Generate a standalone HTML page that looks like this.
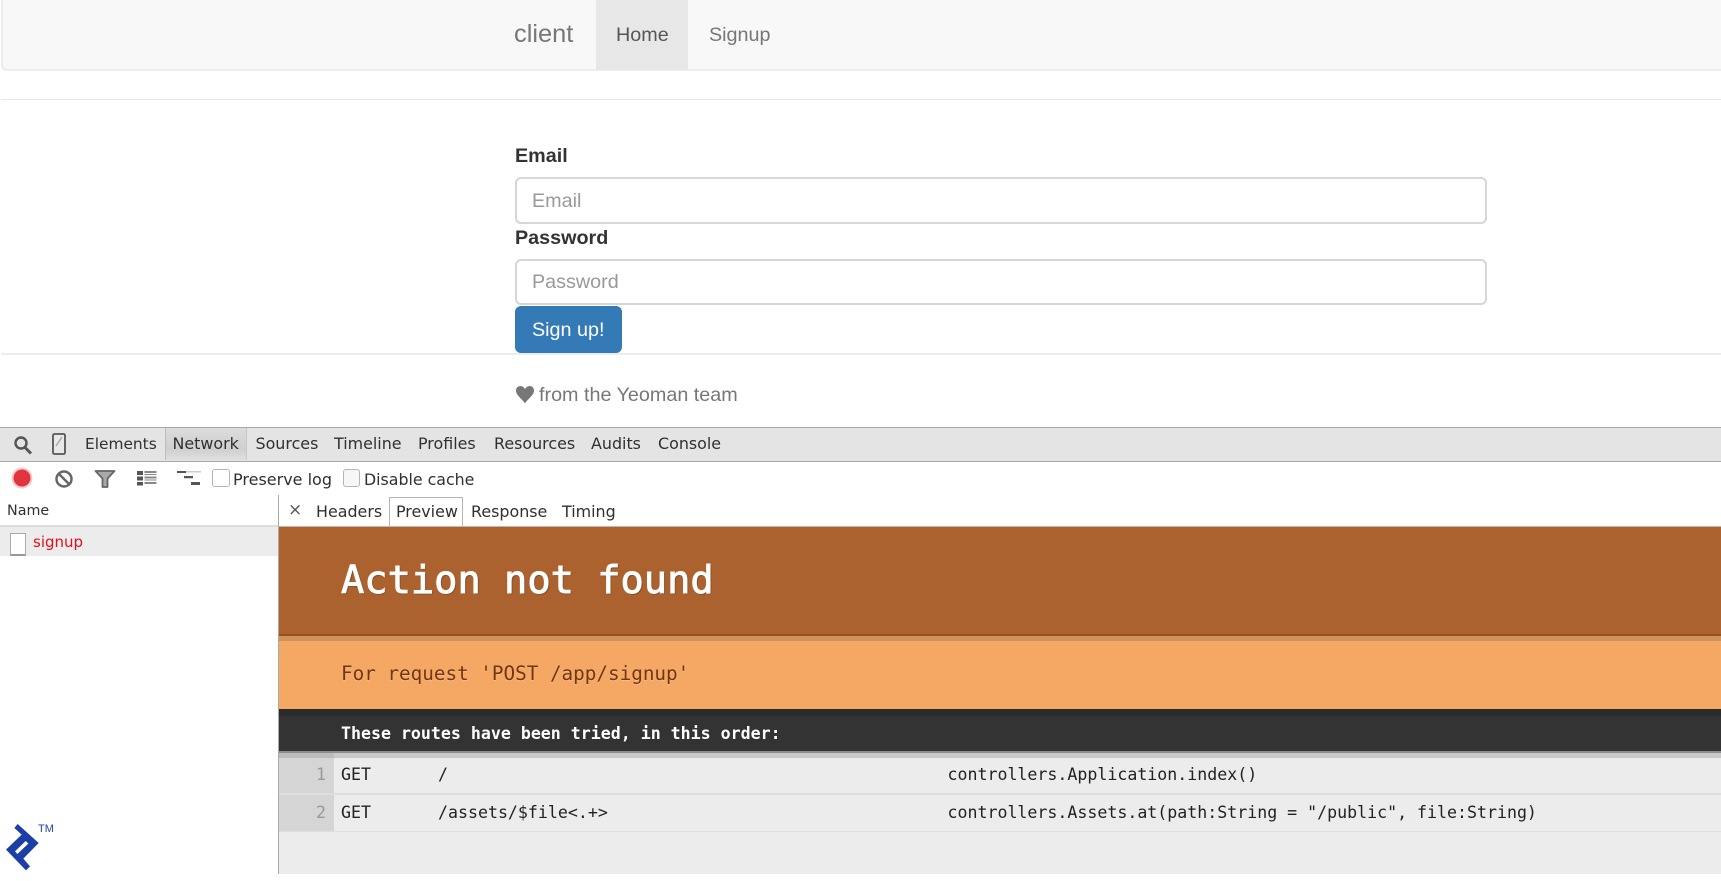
<!DOCTYPE html>
<html><head><meta charset="utf-8"><title>client</title>
<style>
html,body{margin:0;padding:0;background:#fff}
body{width:1721px;height:881px;position:relative;overflow:hidden;font-family:"Liberation Sans",sans-serif}
.a{position:absolute}
.t{position:absolute;white-space:pre;line-height:30px;height:30px}
.s{font-size:19.75px}
.d{font-family:"DejaVu Sans",sans-serif;font-size:15.9px;color:#303030}
.m{font-family:"DejaVu Sans Mono","Liberation Mono",monospace;font-size:16.6px;color:#222}
</style></head><body>
<!-- navbar -->
<div class="a" style="left:1px;top:-4px;width:1722px;height:71px;background:#f8f8f8;border:2px solid #ececec;border-radius:6px"></div>
<div class="a" style="left:596px;top:0;width:92px;height:70px;background:#e7e7e7"></div>
<div class="t" style="left:514px;top:19px;font-size:25.4px;color:#777">client</div>
<div class="t s" style="left:616px;top:20px;color:#555">Home</div>
<div class="t s" style="left:709px;top:20px;color:#777">Signup</div>
<div class="a" style="left:1px;top:98.5px;width:1720px;height:1.5px;background:#e6e6e6"></div>
<!-- form -->
<div class="t s" style="left:515px;top:141px;font-weight:bold;color:#333">Email</div>
<div class="a" style="left:515px;top:177px;width:972px;height:46.500px;border:2px solid #d6d6d6;border-radius:6px;background:#fff;box-sizing:border-box"></div>
<div class="t s" style="left:532px;top:185.500px;color:#999">Email</div>
<div class="t s" style="left:515px;top:223px;font-weight:bold;color:#333">Password</div>
<div class="a" style="left:515px;top:258.500px;width:972px;height:46.500px;border:2px solid #d6d6d6;border-radius:6px;background:#fff;box-sizing:border-box"></div>
<div class="t s" style="left:532px;top:267px;color:#999">Password</div>
<div class="a" style="left:1px;top:353px;width:1720px;height:1.5px;background:#ececec"></div>
<div class="a" style="left:515px;top:305.5px;width:107px;height:47.5px;background:#337ab7;border-radius:6px"></div>
<div class="t s" style="left:532px;top:315px;color:#fff">Sign up!</div>
<svg class="a" style="left:515px;top:385px" width="20" height="19" viewBox="0 0 20 19"><path d="M10 18.500C8 14.500 1 10.500 1 5.600 1 2.800 3 1 5.300 1 7.300 1 9 2 10 4 11 2 12.700 1 14.700 1 17 1 19 2.800 19 5.600 19 10.500 12 14.500 10 18.500Z" fill="#777"/></svg>
<div class="t s" style="left:539px;top:380px;color:#777">from the Yeoman team</div>
<!-- devtools toolbar -->
<div class="a" style="left:0;top:426.500px;width:1721px;height:35.500px;background:#e4e4e4;border-top:1.5px solid #a8a8a8;border-bottom:1.5px solid #a8a8a8;box-sizing:border-box"></div>
<div class="a" style="left:165px;top:428px;width:82px;height:32px;background:linear-gradient(#dcdcdc,#cfcfcf 65%,#dfdfdf);border-left:1px solid #bdbdbd;border-right:1px solid #c6c6c6;box-sizing:border-box"></div>
<svg class="a" style="left:12px;top:433px" width="22" height="24" viewBox="0 0 22 24"><circle cx="9" cy="10" r="5.500" fill="none" stroke="#555" stroke-width="2.400"/><path d="M13 14.500L19 20.500" stroke="#555" stroke-width="3"/></svg>
<svg class="a" style="left:51px;top:432px" width="16" height="24" viewBox="0 0 16 24"><rect x="2" y="2" width="12" height="20" rx="1.500" fill="#e8e8e8" stroke="#555" stroke-width="1.800"/><path d="M5 14L11 5" stroke="#aaa" stroke-width="1.500"/></svg>
<div class="t d" style="left:85px;top:429px;font-size:15.4px">Elements</div>
<div class="t d" style="left:172.500px;top:429px">Network</div>
<div class="t d" style="left:255.500px;top:429px">Sources</div>
<div class="t d" style="left:334px;top:429px">Timeline</div>
<div class="t d" style="left:418px;top:429px">Profiles</div>
<div class="t d" style="left:494px;top:429px">Resources</div>
<div class="t d" style="left:591px;top:429px">Audits</div>
<div class="t d" style="left:658px;top:429px">Console</div>
<!-- second bar -->
<svg class="a" style="left:8px;top:464px" width="28" height="28" viewBox="0 0 28 28"><circle cx="14" cy="14" r="10.500" fill="#f3c9cb"/><circle cx="14" cy="14" r="8.500" fill="#e2343f"/></svg>
<svg class="a" style="left:52px;top:467px" width="24" height="24" viewBox="0 0 24 24"><circle cx="12" cy="12" r="7.500" fill="none" stroke="#666" stroke-width="2.500"/><path d="M7 7L17 17" stroke="#666" stroke-width="2.500"/></svg>
<svg class="a" style="left:94px;top:469px" width="22" height="20" viewBox="0 0 22 20"><path d="M1.500 2H20.500L13.500 9.500V18H8.500V9.500Z" fill="#aaa" stroke="#666" stroke-width="1.800" stroke-linejoin="round"/></svg>
<svg class="a" style="left:137px;top:470px" width="20" height="16" viewBox="0 0 20 16"><path d="M0 1h6v4H0zM0 6.500h6v4H0zM0 12h6v3.500H0z" fill="#555"/><path d="M7.500 1h12v2h-12zM7.500 4h12v1h-12zM7.500 6.500h12v2h-12zM7.500 9.500h12v1h-12zM7.500 12h12v2h-12z" fill="#888"/></svg>
<svg class="a" style="left:177px;top:470px" width="25" height="18" viewBox="0 0 25 18"><path d="M0 1h9v2H0zM7 6h9v2.200H7zM14 12h9v3H14z" fill="#555"/><path d="M9 1h15v1.500H9z" fill="#ccc"/></svg>
<div class="a" style="left:212px;top:469px;width:16px;height:16px;border:1px solid #b5b5b5;border-radius:3px;background:#fff"></div>
<div class="t d" style="left:233px;top:464.500px;font-size:16px">Preserve log</div>
<div class="a" style="left:343px;top:469px;width:15px;height:16px;border:1px solid #b5b5b5;border-radius:3px;background:#f6f6f6"></div>
<div class="t d" style="left:364px;top:464.500px;font-size:15.800px">Disable cache</div>
<div class="t d" style="left:7px;top:495.500px;font-size:14.300px">Name</div>
<div class="a" style="left:0;top:525px;width:278px;height:2px;background:#dcdcdc"></div>
<div class="a" style="left:0;top:527px;width:278px;height:29px;background:#ececec"></div>
<div class="a" style="left:10px;top:533px;width:14px;height:20px;background:#fff;border:1px solid #aaa;border-bottom:2px solid #999"></div>
<div class="t d" style="left:33px;top:527px;font-size:15px;color:#e0101c">signup</div>
<!-- preview tabs -->
<div class="t d" style="left:288px;top:495px;font-size:17px;color:#555">×</div>
<div class="t d" style="left:316px;top:497px">Headers</div>
<div class="a" style="left:389px;top:497px;width:74px;height:30px;border:1px solid #b5b5b5;border-bottom:none;background:#fff;box-sizing:border-box"></div>
<div class="t d" style="left:396px;top:497px">Preview</div>
<div class="t d" style="left:471px;top:497px">Response</div>
<div class="t d" style="left:562px;top:497px">Timing</div>
<div class="a" style="left:277.500px;top:495px;width:1.500px;height:379px;background:#a9a9a9"></div>
<!-- preview content -->
<div class="a" style="left:279px;top:526px;width:1442px;height:109px;background:#ab622f"></div>
<div class="a" style="left:279px;top:526px;width:1442px;height:1px;background:#c9b8aa"></div>
<div class="t" style="left:341px;top:566px;font-family:'DejaVu Sans Mono',monospace;font-size:38.700px;color:#fff;-webkit-text-stroke:.9px #fff;text-shadow:1px 1px 1px rgba(0,0,0,.35)">Action not found</div>
<div class="a" style="left:279px;top:634px;width:1442px;height:1.500px;background:#a04f14"></div>
<div class="a" style="left:279px;top:635.500px;width:1442px;height:5.500px;background:#cd935c"></div>
<div class="a" style="left:279px;top:641px;width:1442px;height:68px;background:#f4a864"></div>
<div class="t m" style="left:341px;top:659px;font-size:19.300px;color:#733512;text-shadow:0 1px 0 rgba(255,255,255,.25)">For request 'POST /app/signup'</div>
<div class="a" style="left:279px;top:709px;width:1442px;height:6.500px;background:#2b2b2b"></div>
<div class="a" style="left:279px;top:715.500px;width:1442px;height:36px;background:#333"></div>
<div class="t m" style="left:341px;top:719px;font-weight:bold;color:#fff">These routes have been tried, in this order:</div>
<div class="a" style="left:279px;top:751px;width:1442px;height:1.500px;background:#8d8d8d"></div>
<div class="a" style="left:279px;top:752.500px;width:1442px;height:5px;background:#c9c9c9"></div>
<div class="a" style="left:279px;top:757.500px;width:1442px;height:116.500px;background:#ececec"></div>
<div class="a" style="left:279px;top:752.500px;width:55px;height:5px;background:#bcbcbc"></div>
<div class="a" style="left:279px;top:757.500px;width:55px;height:74px;background:#d5d5d5"></div>
<div class="a" style="left:279px;top:793px;width:1442px;height:1.500px;background:#dedede"></div>
<div class="a" style="left:279px;top:830.500px;width:1442px;height:1.500px;background:#dedede"></div>
<div class="t m" style="left:316px;top:760px;color:#999">1</div>
<div class="t m" style="left:316px;top:798px;color:#999">2</div>
<div class="t m" style="left:341px;top:760px">GET</div>
<div class="t m" style="left:341px;top:798px">GET</div>
<div class="t m" style="left:438px;top:760px">/</div>
<div class="t m" style="left:438px;top:798px">/assets/$file&lt;.+&gt;</div>
<div class="t m" style="left:947.500px;top:760px">controllers.Application.index()</div>
<div class="t m" style="left:947.500px;top:798px">controllers.Assets.at(path:String = "/public", file:String)</div>
<!-- logo -->
<svg class="a" style="left:0;top:818px" width="60" height="56" viewBox="0 0 180 168"><path fill-rule="evenodd" fill="#1c3ea5" d="M43 30L53 18 116 75 70 122 90 145 78 157 18 95 65 50ZM45 100L52 108 85 77 77 69Z"/></svg>
<div class="a" style="left:38px;top:822px;font-size:11px;line-height:14px;color:#2343a3">TM</div>
</body></html>
